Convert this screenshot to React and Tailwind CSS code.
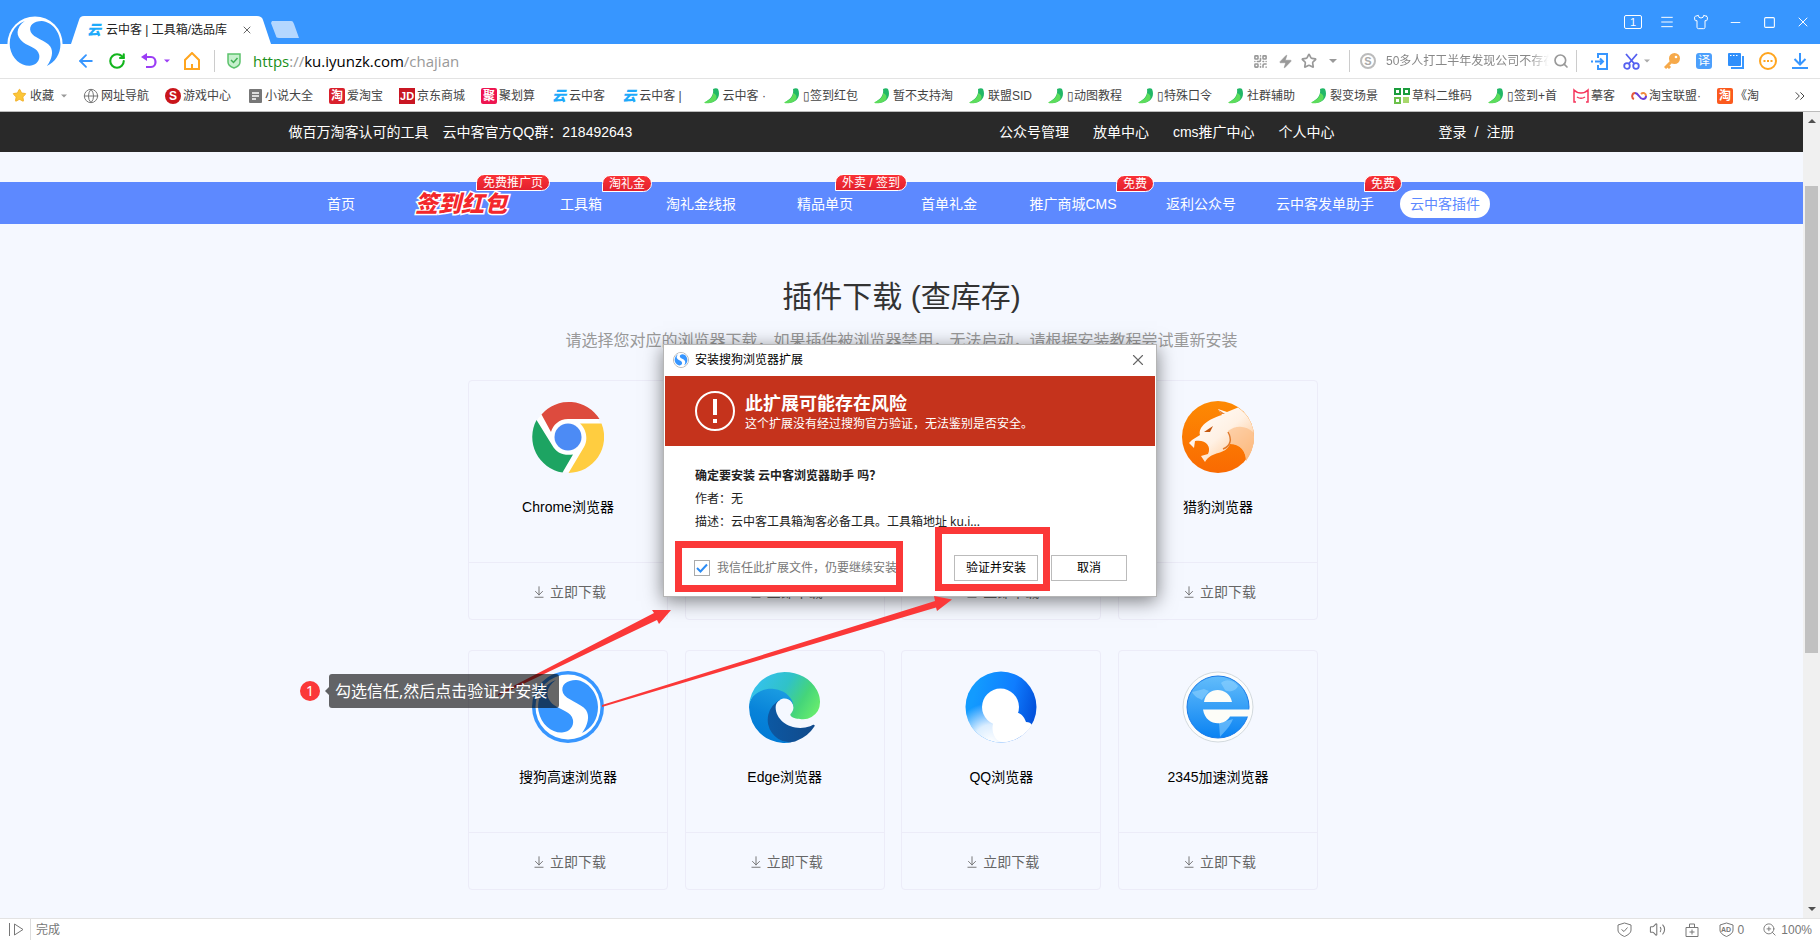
import React, { useState } from "react";
import {
  ArrowDownToLine,
  ArrowLeft,
  ChevronsRight,
  Globe,
  Menu,
  Minus,
  QrCode,
  RotateCw,
  Search,
  Shirt,
  Square,
  Star,
  Volume2,
  X,
  Zap,
  ZoomIn,
} from "lucide-react";

const SogouMark = ({ className, ring }) => (
  <svg className={className} viewBox={ring ? "0 0 72 72" : "3 3 66 66"}>
    {ring && <circle cx="36" cy="36" r="36" fill="#3796ff" />}
    <circle cx="36" cy="36" r="32.5" fill="#fff" />
    <path
      fill="#3796ff"
      d="M24 9C10 14 5 28 6.500 40C9 54 20 62 30 61.500C38 61 42 55 41 49C39 40 30 40 22 34C13 27 13 17 24 9Z"
    />
    <path
      fill="#3796ff"
      d="M44 9C56 10 66 22 66 36C66 48 60 57 50 62C56 54 58 45 54 39C49 32 34 29 31 22C28 14 35 9 44 9Z"
    />
  </svg>
);

const ChromeLogo = () => (
  <svg className="size-[72px]" viewBox="0 0 72 72">
    <circle cx="36" cy="36" r="35" fill="#fff" />
    <path fill="#dd4b3e" d="M9.500 13.500A36 36 0 0 1 67.500 18H36C27 18 21 24 19 31Z" />
    <path fill="#1da462" d="M4.500 19L20 44C24 52 32 55 41 53.500L30.500 71.500A36 36 0 0 1 4.500 19Z" />
    <path fill="#ffcd40" d="M48 22.500H69.500A36 36 0 0 1 36.500 72L52 46C56 39 55 29 48 22.500Z" />
    <circle cx="36" cy="36" r="13.500" fill="#4c8bf5" />
  </svg>
);

const CheetahLogo = () => (
  <svg className="size-[72px]" viewBox="0 0 72 72">
    <defs>
      <linearGradient id="cheetahBg" x1="0" y1="0" x2="0" y2="1">
        <stop offset="0" stopColor="#fd8a03" />
        <stop offset="1" stopColor="#f96a02" />
      </linearGradient>
      <linearGradient id="cheetahFur" x1="0" y1="0" x2="1" y2="1">
        <stop offset="0" stopColor="#fff" />
        <stop offset="0.5" stopColor="#fff1e4" />
        <stop offset="1" stopColor="#fdb878" />
      </linearGradient>
    </defs>
    <circle cx="36" cy="36" r="36" fill="url(#cheetahBg)" />
    <path
      fill="url(#cheetahFur)"
      d="M36 8L45 11L56 6.500C66 13 72 24 72 36C72 45 69 53 64 60C64 50 58 43 48 43C43 55 30 49 23 61L19 55L26 53C30 45 23 38 13 40L12 47L7 42L10 39L18 34C16 26 26 18 40 14Z"
    />
    <path fill="#fcb577" opacity="0.55" d="M46 30C54 24 64 24 72 32C72 45 69 53 64 60C64 50 58 43 48 43C50 38 49 34 46 30Z" />
    <path fill="none" stroke="#e07a2c" strokeWidth="1.500" d="M46 31C50 38 49 45 41 48" />
    <path fill="#c4560c" d="M22 31L31 25L28 31Z" />
    <path fill="#e98233" d="M37 9L43 13L39 13Z" />
  </svg>
);

const EdgeLogo = () => (
  <svg className="size-[71px]" viewBox="0 0 256 256">
    <defs>
      <linearGradient id="edgeDark" x1="0" y1="0" x2="1" y2="0">
        <stop offset="0" stopColor="#0c59a4" />
        <stop offset="1" stopColor="#114a8b" />
      </linearGradient>
      <linearGradient id="edgeMid" x1="0.5" y1="0" x2="0.2" y2="1">
        <stop offset="0" stopColor="#1b9de2" />
        <stop offset="0.5" stopColor="#0883d9" />
        <stop offset="1" stopColor="#0078d4" />
      </linearGradient>
      <linearGradient id="edgeTop" x1="0" y1="0.3" x2="1" y2="0.7">
        <stop offset="0" stopColor="#35c1f1" />
        <stop offset="0.45" stopColor="#30c2c8" />
        <stop offset="0.75" stopColor="#45d57a" />
        <stop offset="1" stopColor="#66eb6e" />
      </linearGradient>
    </defs>
    <path
      fill="url(#edgeDark)"
      d="M231.060 190.540c-3.400 1.800-6.900 3.350-10.540 4.700a101.920 101.920 0 0 1-35.900 6.460c-47.320 0-88.540-32.550-88.540-74.320A31.480 31.480 0 0 1 112.500 99.900c-42.800 1.800-53.800 46.400-53.800 72.530 0 73.880 68.090 81.370 82.760 81.370 7.910 0 19.840-2.300 27-4.560l1.310-.44a128.340 128.340 0 0 0 66.600-52.800 4 4 0 0 0-5.320-5.460z"
    />
    <path
      fill="url(#edgeMid)"
      d="M105.730 241.420a79.200 79.200 0 0 1-22.740-21.340 80.720 80.720 0 0 1 29.530-120.170c3.120-1.470 8.450-4.130 15.540-4a32.350 32.350 0 0 1 25.690 13 31.880 31.880 0 0 1 6.360 18.660c0-.21 24.460-79.600-80-79.600-43.900 0-80 41.660-80 78.210a130.150 130.150 0 0 0 12.110 56 128 128 0 0 0 156.380 67.110 75.550 75.550 0 0 1-62.780-8z"
    />
    <path
      fill="url(#edgeTop)"
      d="M152.330 148.860c-.81 1.050-3.300 2.500-3.300 5.660 0 2.610 1.700 5.120 4.720 7.230 14.380 10 41.490 8.680 41.560 8.680a59.560 59.560 0 0 0 30.270-8.350A61.380 61.380 0 0 0 256 109.200c.26-22.410-8-37.310-11.340-43.910C223.460 23.840 177.720 0 128 0A128 128 0 0 0 0 126.200c.48-36.540 36.800-66.050 80-66.050 3.500 0 23.460.34 42 10.070 16.340 8.580 24.900 18.940 30.850 29.210 6.180 10.670 7.280 24.150 7.280 29.520s-2.740 13.330-7.800 19.910z"
    />
  </svg>
);

const QQLogo = () => (
  <svg className="size-[72px]" viewBox="0 0 72 72">
    <defs>
      <linearGradient id="qqRing" x1="0.1" y1="0.4" x2="0.95" y2="0.6">
        <stop offset="0" stopColor="#129bff" />
        <stop offset="0.6" stopColor="#0f7dff" />
        <stop offset="1" stopColor="#0353dd" />
      </linearGradient>
      <radialGradient id="qqFade" cx="0.36" cy="1" r="0.56">
        <stop offset="0" stopColor="#fff" />
        <stop offset="0.45" stopColor="#fff" stopOpacity="0.85" />
        <stop offset="1" stopColor="#fff" stopOpacity="0" />
      </radialGradient>
    </defs>
    <circle cx="36" cy="36" r="35.500" fill="url(#qqRing)" />
    <circle cx="36" cy="36" r="35.500" fill="url(#qqFade)" />
    <circle cx="35.500" cy="36" r="18.500" fill="#fff" />
    <path
      fill="#fff"
      d="M28 53C31 49 36 50 40 47C43 39 57 38 61 51C64 51 66 52 67 54A36 36 0 0 1 38 71C30 71 26 60 28 53Z"
    />
  </svg>
);

const Logo2345 = () => (
  <svg className="size-[72px]" viewBox="0 0 72 72">
    <defs>
      <linearGradient id="blue2345" x1="0" y1="0" x2="0" y2="1">
        <stop offset="0" stopColor="#63bdfb" />
        <stop offset="1" stopColor="#0a82f2" />
      </linearGradient>
    </defs>
    <circle cx="36" cy="36" r="35" fill="#fcfdfd" stroke="#d3dade" />
    <circle cx="36" cy="36" r="31" fill="url(#blue2345)" stroke="#1a7be8" />
    <path fill="#9ad8ff" opacity="0.5" d="M39 12C44 7 52 9 56 15C54 20 47 22 43 19ZM10 21L22 18L27 20L20 29C16 27 13 26 10 21ZM37 52L51 48C48 56 43 60 38 66Z" />
    <path fill="#fdfdf8" d="M22 31C24 15 47 15 50 31Z" />
    <path fill="#fdfdf8" d="M21 38.500H68V45.500H48C43 55 24 56 21 38.500Z" />
  </svg>
);

const YunIcon = () => (
  <span
    aria-hidden="true"
    className="flex size-4 shrink-0 items-center justify-center text-sm leading-4 font-black text-[#1eaafa] italic"
  >
    云
  </span>
);

const LeafIcon = () => (
  <svg className="mr-px size-4 shrink-0" viewBox="0 0 16 16">
    <path fill="#22b767" d="M9 1C11 0 13 0 14 1C17 8 13 15 4 15L1 14.500C6 11 10 8 9 1Z" />
    <path fill="#5ddc5b" d="M9 5C15 7 13 14 6 15C4 15.500 1 15.500 0 14.500C5 12 9 10 9 5Z" />
  </svg>
);

const Tile = ({ className, children }) => (
  <span className={`flex size-4 shrink-0 items-center justify-center leading-4 font-bold text-white ${className}`}>
    {children}
  </span>
);

const bookmarks = [
  { icon: <Globe className="size-4 text-[#777]" strokeWidth={1.5} />, text: "网址导航" },
  { icon: <Tile className="rounded-full bg-[#c9151b] text-xs">S</Tile>, text: "游戏中心" },
  {
    icon: (
      <svg className="size-4" viewBox="0 0 16 16">
        <rect x="2" y="1" width="13" height="14" rx="1" fill="#777" />
        <path stroke="#fff" strokeWidth="1.500" d="M5 5H12M5 8H12M5 11H9" />
      </svg>
    ),
    text: "小说大全",
  },
  { icon: <Tile className="rounded-xs bg-[#d9202c] text-xs">淘</Tile>, text: "爱淘宝" },
  { icon: <Tile className="bg-[#c91623] text-[11px]">JD</Tile>, text: "京东商城" },
  { icon: <Tile className="rounded-xs bg-[#ee1550] text-xs">聚</Tile>, text: "聚划算" },
  { icon: <YunIcon />, text: "云中客" },
  { icon: <YunIcon />, text: "云中客 |", spacing: "pr-[6px]" },
  { icon: <LeafIcon />, text: "云中客 ·", spacing: "pr-[2px]" },
  { icon: <LeafIcon />, text: "▯签到红包" },
  { icon: <LeafIcon />, text: "暂不支持淘" },
  { icon: <LeafIcon />, text: "联盟SID" },
  { icon: <LeafIcon />, text: "▯动图教程" },
  { icon: <LeafIcon />, text: "▯特殊口令" },
  { icon: <LeafIcon />, text: "社群辅助" },
  { icon: <LeafIcon />, text: "裂变场景" },
  {
    icon: (
      <svg className="size-4" viewBox="0 0 16 16" fill="none" strokeWidth="2">
        <path stroke="#1a9c3c" d="M1 1H6V6H1ZM10 1H15V6H10Z" />
        <path stroke="#6cc04a" d="M1 10H6V15H1Z" />
        <path fill="#a8d86c" stroke="#a8d86c" d="M10 10H14V14H10Z" />
      </svg>
    ),
    text: "草料二维码",
  },
  { icon: <LeafIcon />, text: "▯签到+首" },
  {
    icon: (
      <svg className="size-4" viewBox="0 0 16 16" fill="none" stroke="#f5365c" strokeWidth="1.500">
        <path d="M3 14H1V2C5 6 11 6 15 2V14H13M4 9C7 11 9 11 12 9" />
      </svg>
    ),
    text: "摹客",
  },
  {
    icon: (
      <svg className="size-4" viewBox="0 0 16 16" fill="none" strokeWidth="2">
        <path stroke="#e4573d" d="M3 11C0 10 1 5 4 5" />
        <path stroke="#6b3fd4" d="M4 5C8 5 8 11 12 11C14 11 15 10 15 8" />
        <path stroke="#f08a3c" d="M10 6C12 4 15 5 15 8" />
      </svg>
    ),
    text: "淘宝联盟·",
  },
  { icon: <Tile className="rounded-xs bg-[#fb5a1e] text-xs">淘</Tile>, text: "《淘" },
];

const navItems = [
  { text: "首页", width: "w-[120px]" },
  { text: "签到红包", width: "w-[120px]", art: true, badge: "免费推广页", badgeLeft: "left-[75px] top-[-8px]" },
  { text: "工具箱", width: "w-[120px]", badge: "淘礼金", badgeLeft: "left-[81px] top-[-7px]" },
  { text: "淘礼金线报", width: "w-[120px]" },
  { text: "精品单页", width: "w-[128px]", badge: "外卖 / 签到", badgeLeft: "left-[74px] top-[-8px]" },
  { text: "首单礼金", width: "w-[120px]" },
  { text: "推广商城CMS", width: "w-[128px]", badge: "免费", badgeLeft: "left-[107px] top-[-7px]" },
  { text: "返利公众号", width: "w-[128px]" },
  { text: "云中客发单助手", width: "w-[120px]", badge: "免费", badgeLeft: "left-[99px] top-[-7px]" },
  { text: "云中客插件", width: "w-[120px]", active: true },
];

const browsers = [
  { name: "Chrome浏览器", logo: <ChromeLogo /> },
  {},
  {},
  { name: "猎豹浏览器", logo: <CheetahLogo /> },
  { name: "搜狗高速浏览器", logo: <SogouMark ring className="size-[72px]" /> },
  { name: "Edge浏览器", logo: <EdgeLogo /> },
  { name: "QQ浏览器", logo: <QQLogo /> },
  { name: "2345加速浏览器", logo: <Logo2345 /> },
];

const Caret = ({ className }) => (
  <svg className={`h-1 w-2 ${className}`} viewBox="0 0 8 4">
    <path fill="currentColor" d="M0 0H8L4 4Z" />
  </svg>
);

const WindowButton = ({ label, children }) => (
  <button aria-label={label} className="flex size-[18px] items-center justify-center">
    {children}
  </button>
);

const TitleBar = () => (
  <header className="relative flex h-11 shrink-0 items-end bg-[#3796ff]">
    <SogouMark className="absolute top-4 left-[7px] z-10 size-14" />
    <div className="relative ml-[71px] flex h-7 w-[200px] items-center pl-[15px] text-xs text-[#222]">
      <svg className="absolute inset-0 h-7 w-[200px]" viewBox="0 0 200 28" preserveAspectRatio="none">
        <path fill="#fff" d="M0 28L8 4C9 1 10 0 13 0H186C189 0 191 1 192 4L200 28Z" />
      </svg>
      <span className="relative flex items-center gap-1">
        <YunIcon />
        <span className="leading-4 whitespace-nowrap">云中客 | 工具箱/选品库</span>
      </span>
      <button aria-label="关闭标签" className="relative ml-auto pr-[18px]">
        <X className="size-3 text-[#666]" strokeWidth={2} />
      </button>
    </div>
    <button aria-label="新标签" className="mb-[6px]">
      <svg className="h-[17px] w-7" viewBox="0 0 28 17">
        <path fill="#b4d7ff" d="M1 0H20C22 0 22 1 23 3L28 17H8C6 17 5 16 5 15L0 2Z" />
      </svg>
    </button>
    <div className="ml-auto flex h-11 items-center gap-4 pr-2 text-white">
      <button className="flex h-[14px] w-[18px] items-center justify-center rounded-xs border border-white text-[11px]">
        1
      </button>
      <WindowButton label="菜单">
        <Menu className="size-4" strokeWidth={1.5} />
      </WindowButton>
      <WindowButton label="皮肤">
        <Shirt className="size-4" strokeWidth={1.5} />
      </WindowButton>
      <WindowButton label="最小化">
        <Minus className="size-[15px]" strokeWidth={1.5} />
      </WindowButton>
      <WindowButton label="最大化">
        <Square className="size-[13px]" strokeWidth={2} />
      </WindowButton>
      <WindowButton label="关闭">
        <X className="size-4" strokeWidth={1.5} />
      </WindowButton>
    </div>
  </header>
);

const AddressBar = () => (
  <div className="flex h-[35px] shrink-0 items-center border-b border-[#e3e3e3] bg-white pr-3 pl-[76px]">
    <button aria-label="后退">
      <ArrowLeft className="size-5 text-[#3796ff]" strokeWidth={2.2} />
    </button>
    <button aria-label="刷新" className="ml-3">
      <RotateCw className="size-[18px] text-[#12b51c]" strokeWidth={2.8} />
    </button>
    <button aria-label="撤销" className="ml-[15px] flex items-center gap-[7px] text-[#9b3df5]">
      <svg className="size-4" viewBox="0 0 16 16">
        <path fill="currentColor" d="M0 4L6 0V8Z" />
        <path fill="none" stroke="currentColor" strokeWidth="2.200" d="M4 4H10C16 4 16 14 10 14H5" />
      </svg>
      <Caret className="w-[6px]" />
    </button>
    <button aria-label="主页" className="ml-[14px]">
      <svg className="h-[18px] w-4" viewBox="0 0 16 18" fill="none" stroke="#ffa51f" strokeWidth="2">
        <path d="M1 17V8L8 1L15 8V17ZM8 17V12" />
      </svg>
    </button>
    <span className="ml-[14px] h-[22px] w-px bg-[#ccc]" />
    <svg className="ml-3 h-4 w-[14px]" viewBox="0 0 14 16">
      <path fill="#c6f0cd" stroke="#5cc26c" strokeWidth="1.500" d="M1 1H13V9C13 12 10 14 7 15C4 14 1 12 1 9Z" />
      <path fill="none" stroke="#3fae52" strokeWidth="1.500" d="M4 7L6.500 9.500L10.500 5" />
    </svg>
    <a href="#url" className="ml-3 font-['Open_Sans'] text-[15px] leading-5 text-[#999]">
      <span className="text-[#1a8f1a]">https</span>://
      <span className="text-black">ku.iyunzk.com</span>/chajian
    </a>
    <div className="ml-auto flex items-center text-[#999]">
      <QrCode className="size-[15px]" strokeWidth={2.5} />
      <Zap className="ml-[10px] size-[15px] fill-current" strokeWidth={1} />
      <Star className="ml-[8px] size-4" strokeWidth={2.5} />
      <Caret className="ml-3" />
      <span className="ml-3 h-[22px] w-px bg-[#ccc]" />
      <span className="ml-[10px] flex size-4 items-center justify-center rounded-full border-2 border-[#bbb] text-[11px] font-bold text-[#aaa]">
        S
      </span>
      <input
        aria-label="搜索"
        defaultValue="50多人打工半年发现公司不存在"
        className="ml-[10px] w-[163px] bg-transparent text-xs leading-5 text-[#888] outline-none [mask-image:linear-gradient(to_right,#000_88%,transparent)]"
      />
      <Search className="ml-1 size-4" strokeWidth={2.5} />
      <span className="ml-[7px] h-[22px] w-px bg-[#ccc]" />
    </div>
    <div className="ml-[14px] flex items-center">
      <svg className="size-[17px]" viewBox="0 0 17 17" fill="none" stroke="#3796ff" strokeWidth="2">
        <path d="M7 5V1H16V16H7V12M0 8.500H2M4 8.500H12M9 5.500L12 8.500L9 11.500" />
      </svg>
      <svg className="ml-[15px] size-[17px]" viewBox="0 0 17 17" fill="none" stroke="#5560f0" strokeWidth="1.800">
        <path d="M3 1L11.500 11M14 1L5.500 11" />
        <circle cx="4" cy="13" r="2.800" />
        <circle cx="13" cy="13" r="2.800" />
      </svg>
      <Caret className="ml-1 w-[6px] text-[#aaa]" />
      <svg className="ml-[14px] size-4" viewBox="0 0 16 16">
        <circle cx="10.500" cy="5.500" r="5.500" fill="#f6a94a" />
        <path stroke="#f6a94a" strokeWidth="3" d="M8 8L1 15M4 13L6 15" />
        <circle cx="12" cy="4" r="1.300" fill="#fff" />
      </svg>
      <span className="ml-4 flex size-4 items-center justify-center rounded-[3px] bg-[#4c9ffc] text-xs leading-4 text-white">
        译
      </span>
      <svg className="ml-4 size-4" viewBox="0 0 16 16">
        <path fill="none" stroke="#3796ff" strokeWidth="2" d="M15 3V15H3" />
        <rect width="13" height="13" rx="1" fill="#2f8ffb" />
        <path stroke="#fff" strokeDasharray="1.500 1.500" d="M2 2.500H11" />
      </svg>
      <svg className="ml-[15px] size-[18px]" viewBox="0 0 18 18">
        <circle cx="9" cy="9" r="8" fill="none" stroke="#ffa51f" strokeWidth="2" />
        <path stroke="#ffa51f" strokeWidth="2" d="M4.500 9H6.500M8 9H10M11.500 9H13.500" />
      </svg>
      <svg className="ml-[15px] size-4" viewBox="0 0 16 16" fill="none" stroke="#3796ff" strokeWidth="2">
        <path d="M8 0V11M2.500 6L8 11.500L13.500 6M0 15H16" />
      </svg>
    </div>
  </div>
);

const BookmarkBar = () => (
  <div className="flex h-[33px] shrink-0 items-center gap-4 border-b border-[#bbb] bg-white px-3 pt-px text-xs whitespace-nowrap text-[#444]">
    <button className="flex items-center gap-[3px]">
      <Star className="size-[15px] fill-[#fbc638] text-[#f1ae25]" strokeWidth={1.5} />
      收藏
      <Caret className="ml-1 w-[6px] text-[#999]" />
    </button>
    {bookmarks.map((item, index) => (
      <a key={index} href="#bookmark" className={`flex items-center gap-[2px] ${item.spacing || ""}`}>
        {item.icon}
        {item.text}
      </a>
    ))}
    <button aria-label="更多书签" className="ml-auto">
      <ChevronsRight className="size-4" strokeWidth={1.5} />
    </button>
  </div>
);

const TopLinks = () => (
  <div className="bg-[#292929] text-sm text-white">
    <div className="mx-auto flex h-10 w-[1226px] items-center">
      <span>做百万淘客认可的工具</span>
      <span className="ml-[14px]">云中客官方QQ群：218492643</span>
      <div className="ml-auto flex gap-6">
        <a href="#wechat">公众号管理</a>
        <a href="#release">放单中心</a>
        <a href="#cms">cms推广中心</a>
        <a href="#me">个人中心</a>
      </div>
      <div className="ml-[104px] flex gap-2">
        <a href="#login">登录</a>/<a href="#register">注册</a>
      </div>
    </div>
  </div>
);

const Nav = () => (
  <nav className="mt-[30px] flex h-[42px] justify-center bg-[#5d89ff] pr-[17px] text-sm text-white">
    {navItems.map((item) => (
      <div key={item.text} className={`relative flex items-center justify-center pt-[2px] ${item.width}`}>
        <a
          href="#nav"
          className={
            item.active
              ? "rounded-full bg-white px-[10px] leading-7 text-[#5d89ff]"
              : item.art
                ? "text-[23px] leading-7 font-black whitespace-nowrap text-[#f3272c] italic [paint-order:stroke_fill] [-webkit-text-stroke:3px_white]"
                : "whitespace-nowrap"
          }
        >
          {item.text}
        </a>
        {item.badge && (
          <span
            className={`absolute rounded-full rounded-bl-none border border-white bg-linear-to-b from-[#fa3236] to-[#e3202e] px-[6px] pt-px text-xs leading-[14px] whitespace-nowrap ${item.badgeLeft}`}
          >
            {item.badge}
          </span>
        )}
      </div>
    ))}
  </nav>
);

const BrowserCard = ({ name, logo }) => (
  <div className="flex h-60 w-[200px] flex-col rounded-sm border border-[#ececf8]">
    <div className="flex h-[182px] flex-col items-center border-b border-[#ececf8] pt-5">
      <div className="flex size-[72px] items-center justify-center">{logo}</div>
      <p className="mt-6 text-sm text-black">{name}</p>
    </div>
    <a href="#download" className="flex flex-1 items-center justify-center gap-1 pt-[2px] pl-[2px] text-sm text-[#666]">
      <ArrowDownToLine className="size-[14px]" strokeWidth={1.5} />
      立即下载
    </a>
  </div>
);

const InstallDialog = () => {
  const [trusted, setTrusted] = useState(true);

  return (
    <div
      role="dialog"
      aria-label="安装搜狗浏览器扩展"
      className="relative h-[253px] w-[494px] border border-[#b5b5b5] bg-white px-px font-['Noto_Sans','Noto_Sans_CJK_SC',sans-serif] text-xs text-[#222] shadow-[0_4px_18px_rgba(0,0,0,0.5)]"
    >
      <div className="flex h-[31px] items-center pr-2 pl-2 text-black">
        <span className="flex size-4 items-center justify-center rounded-full border border-[#bbb]">
          <SogouMark className="size-[14px]" />
        </span>
        <span className="ml-[6px]">安装搜狗浏览器扩展</span>
        <button aria-label="关闭" className="ml-auto">
          <X className="size-[18px] text-[#666]" strokeWidth={1.5} />
        </button>
      </div>
      <div className="flex h-[70px] items-center bg-[#c5331c] pl-[30px] text-white">
        <span className="flex size-10 flex-col items-center justify-center gap-1 rounded-full border-2 border-white">
          <i className="h-4 w-1 bg-white" />
          <i className="size-1 bg-white" />
        </span>
        <div className="ml-[10px] pt-[2px]">
          <h2 className="text-lg leading-6 font-bold">此扩展可能存在风险</h2>
          <p className="leading-[18px]">这个扩展没有经过搜狗官方验证，无法鉴别是否安全。</p>
        </div>
      </div>
      <div className="px-[30px] pt-[18px] leading-[23px]">
        <p className="font-bold">确定要安装 云中客浏览器助手 吗？</p>
        <p>作者：无</p>
        <p>描述：云中客工具箱淘客必备工具。工具箱地址 ku.i...</p>
      </div>
      <div className="mt-[22px] flex items-center pr-7 pl-[29px]">
        <label className="flex items-center gap-[7px] whitespace-nowrap text-[#777]">
          <span className="relative flex size-4">
            <input
              type="checkbox"
              checked={trusted}
              onChange={(e) => setTrusted(e.target.checked)}
              className="size-4 appearance-none border border-[#aaa] bg-white"
            />
            {trusted && (
              <svg className="pointer-events-none absolute inset-0 size-4" viewBox="0 0 16 16">
                <path fill="none" stroke="#2b8cf5" strokeWidth="2" d="M3 8L6.500 11.500L13 4.500" />
              </svg>
            )}
          </span>
          我信任此扩展文件，仍要继续安装
        </label>
        <button className="ml-auto h-[26px] w-[84px] border border-[#bbb] text-black">验证并安装</button>
        <button className="ml-[13px] h-[26px] w-[76px] border border-[#bbb] text-black">取消</button>
      </div>
      <Annotations />
    </div>
  );
};

// red marks and the step hint drawn over the dialog
const Annotations = () => (
  <div className="pointer-events-none absolute inset-0">
    <div className="absolute top-[196px] left-[11px] h-[51px] w-[228px] border-[7px] border-[#fb3838]" />
    <div className="absolute top-[182px] left-[271px] h-16 w-[115px] border-[7px] border-[#fb3838]" />
    <svg className="absolute top-[245px] left-[-174px] h-[120px] w-[470px]" viewBox="0 0 470 120">
      <path fill="#fb3838" d="M8 104L164 23L162 20H181L169 34L167 30L8 106Z" />
      <path fill="#fb3838" d="M112 115L445 11L444 6L462 9.500L447 21L446 17.500L112 117Z" />
    </svg>
    <div className="absolute top-[329px] left-[-364px] flex items-center">
      <span className="flex size-5 items-center justify-center rounded-full bg-[#fb3838] text-sm text-white">1</span>
      <svg className="ml-[5px] h-2 w-1" viewBox="0 0 4 8">
        <path fill="#5f6063" d="M4 0V8L0 4Z" />
      </svg>
      <span className="w-[230px] rounded-[3px] bg-black/60 px-[6px] text-base leading-[34px] whitespace-nowrap text-white">
        勾选信任,然后点击验证并安装
      </span>
    </div>
  </div>
);

const ScrollBar = () => (
  <div className="flex w-[17px] shrink-0 flex-col items-center bg-[#f0f0f0] text-[#505050]">
    <Caret className="mt-[7px] rotate-180" />
    <div className="mt-[63px] h-[467px] w-[13px] bg-[#c1c1c1]" />
    <Caret className="mt-auto mb-[7px]" />
  </div>
);

const StatusBar = () => (
  <footer className="flex h-[22px] shrink-0 items-center border-t border-[#e3e3e3] bg-white pr-2 text-xs text-[#777]">
    <svg className="ml-2 h-[13px] w-4" viewBox="0 0 16 13" fill="none" stroke="#777">
      <path d="M1.500 0V13M6.500 1V12L15 6.500Z" />
    </svg>
    <span className="ml-[6px] h-full w-px bg-[#ddd]" />
    <span className="ml-[5px]">完成</span>
    <div className="ml-auto flex items-center">
      <svg className="size-[15px]" viewBox="0 0 15 15" fill="none" stroke="#777">
        <path d="M7.500 1L14 3V8C14 11 11 13 7.500 14.500C4 13 1 11 1 8V3ZM4.500 7.500L7 9.500L10.500 5.500" />
      </svg>
      <Volume2 className="ml-[17px] size-[17px]" strokeWidth={1.5} />
      <svg className="ml-[19px] size-[14px]" viewBox="0 0 14 14" fill="none" stroke="#777">
        <path d="M1 4.500H13V13.500H1ZM4.500 4.500V1H9.500V4.500M7 6.500V11.500M4.500 9H9.500" />
      </svg>
      <span className="relative ml-5 flex size-[15px] items-center justify-center text-[7px] font-bold">
        <svg className="absolute inset-0 size-[15px]" viewBox="0 0 15 15" fill="none" stroke="#777">
          <path d="M7.500 1L14 3V8C14 11 11 13 7.500 14.500C4 13 1 11 1 8V3Z" />
        </svg>
        AD
      </span>
      <span className="ml-1">0</span>
      <ZoomIn className="ml-[18px] size-[15px]" strokeWidth={1.5} />
      <span className="ml-1">100%</span>
    </div>
  </footer>
);

const App = () => {
  return (
    <div className="relative flex h-screen flex-col overflow-hidden font-['Liberation_Sans','Noto_Sans_CJK_SC',sans-serif]">
      <TitleBar />
      <AddressBar />
      <BookmarkBar />
      <div className="flex min-h-0 flex-1">
        <main className="min-w-0 flex-1 overflow-hidden bg-[#f5f8ff]">
          <TopLinks />
          <Nav />
          <h1 className="mt-[53px] text-center text-3xl leading-10 text-[#333]">插件下载 (查库存)</h1>
          <p className="mt-3 text-center text-base text-[#999]">
            请选择您对应的浏览器下载，如果插件被浏览器禁用，无法启动，请根据安装教程尝试重新安装
          </p>
          <div className="mt-[27px] flex justify-center pr-[17px]">
            <div className="flex w-[850px] flex-wrap justify-between gap-y-[30px]">
              {browsers.map((item, index) => (
                <BrowserCard key={index} name={item.name} logo={item.logo} />
              ))}
            </div>
          </div>
        </main>
        <ScrollBar />
      </div>
      <StatusBar />
      <div className="absolute inset-0 z-20 flex items-center justify-center">
        <InstallDialog />
      </div>
    </div>
  );
};

export default App;
